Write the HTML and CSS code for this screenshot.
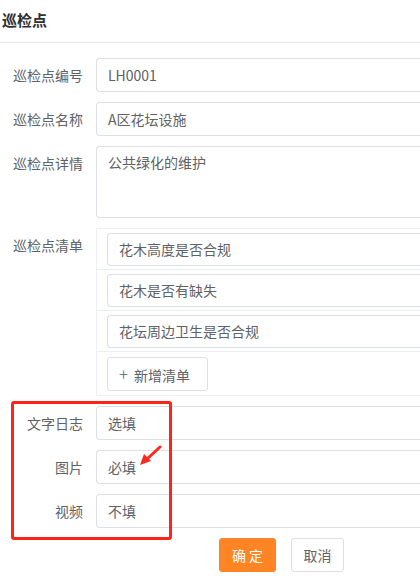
FILE: index.html
```html
<!DOCTYPE html>
<html lang="zh">
<head>
<meta charset="utf-8">
<title>巡检点</title>
<link rel="stylesheet" href="styles.css">
</head>
<body>
<div class="page">
  <div class="title">巡检点</div>
  <div class="form">
    <div class="row">
      <label class="label">巡检点编号</label>
      <div class="field"><div class="input">LH0001</div></div>
    </div>
    <div class="row">
      <label class="label">巡检点名称</label>
      <div class="field"><div class="input">A区花坛设施</div></div>
    </div>
    <div class="row">
      <label class="label">巡检点详情</label>
      <div class="field"><div class="input textarea">公共绿化的维护</div></div>
    </div>
    <div class="row">
      <label class="label">巡检点清单</label>
      <div class="field">
        <div class="list">
          <div class="list-row"><div class="input item">花木高度是否合规</div></div>
          <div class="list-row"><div class="input item">花木是否有缺失</div></div>
          <div class="list-row"><div class="input item">花坛周边卫生是否合规</div></div>
          <div class="list-row last"><button class="add-btn"><span class="plus">+</span>新增清单</button></div>
        </div>
      </div>
    </div>
    <div class="row">
      <label class="label">文字日志</label>
      <div class="field"><div class="input">选填</div></div>
    </div>
    <div class="row">
      <label class="label">图片</label>
      <div class="field"><div class="input">必填</div></div>
    </div>
    <div class="row">
      <label class="label">视频</label>
      <div class="field"><div class="input">不填</div></div>
    </div>
    <div class="actions">
      <button class="btn primary">确 定</button>
      <button class="btn">取消</button>
    </div>
  </div>
  <div class="highlight"></div>
  <svg class="arrow" width="30" height="30" viewBox="0 0 30 30">
    <line x1="24" y1="2" x2="11" y2="14" stroke="#ff2a1a" stroke-width="3" stroke-linecap="round"/>
    <polygon points="4,20 8,9 15,16" fill="#ff2a1a"/>
  </svg>
</div>
</body>
</html>
```

FILE: styles.css
```css
* { box-sizing: border-box; }
html, body {
  margin: 0;
  padding: 0;
  background: #ffffff;
  overflow: hidden;
}
body {
  font-family: "Noto Sans CJK SC", "Noto Sans", sans-serif;
  font-size: 14px;
  color: #606266;
  width: 420px;
  height: 582px;
}
.page {
  position: relative;
  width: 420px;
  height: 582px;
  overflow: hidden;
}
.title {
  height: 43px;
  padding: 9px 0 0 2px;
  font-size: 15px;
  font-weight: bold;
  color: #303133;
  line-height: 22px;
  border-bottom: 1px solid #e4e7ed;
}
.form {
  padding-top: 15px;
  display: flex;
  flex-direction: column;
  gap: 10px;
}
.row {
  display: flex;
  align-items: flex-start;
}
.label {
  width: 96px;
  flex: none;
  padding-right: 13px;
  text-align: right;
  line-height: 34px;
  color: #606266;
  font-size: 14px;
}
.field {
  flex: 1;
  min-width: 0;
}
.input {
  height: 34px;
  border: 1px solid #dcdfe6;
  border-right: none;
  border-radius: 4px 0 0 4px;
  padding: 0 11px;
  line-height: 32px;
  color: #606266;
  font-size: 14px;
  background: #fff;
}
.textarea {
  height: 72px;
  padding: 5px 11px;
  line-height: 21px;
}
.list {
  border: 1px solid #ebeef5;
  border-right: none;
}
.list-row {
  padding: 4px 0 3px 10px;
  border-bottom: 1px solid #ebeef5;
}
.list-row.last {
  padding: 5px 0 4px 10px;
  border-bottom: none;
}
.item {
  height: 33px;
  line-height: 31px;
}
.add-btn {
  height: 34px;
  width: 101px;
  border: 1px solid #dcdfe6;
  border-radius: 3px;
  background: #fff;
  color: #606266;
  font-family: "Noto Sans CJK SC", "Noto Sans", sans-serif;
  font-size: 14px;
  padding: 0 0 0 11px;
  text-align: left;
  line-height: 32px;
}
.plus {
  font-weight: 300;
  font-size: 17px;
  margin-right: 6px;
  color: #606266;
}
.actions {
  display: flex;
  gap: 15px;
  padding-left: 219px;
}
.btn {
  height: 34px;
  border: 1px solid #dcdfe6;
  border-radius: 3px;
  background: #fff;
  color: #606266;
  font-family: "Noto Sans CJK SC", "Noto Sans", sans-serif;
  font-size: 14px;
  padding: 0 10px;
  width: 53px;
}
.btn.primary {
  width: 57px;
  background: #ff8424;
  border-color: #ff8424;
  color: #fff;
}
.highlight {
  position: absolute;
  left: 11px;
  top: 401px;
  width: 161px;
  height: 139px;
  border: 3px solid #ff2416;
  border-radius: 3px;
}
.arrow {
  position: absolute;
  left: 136px;
  top: 445px;
}
```
